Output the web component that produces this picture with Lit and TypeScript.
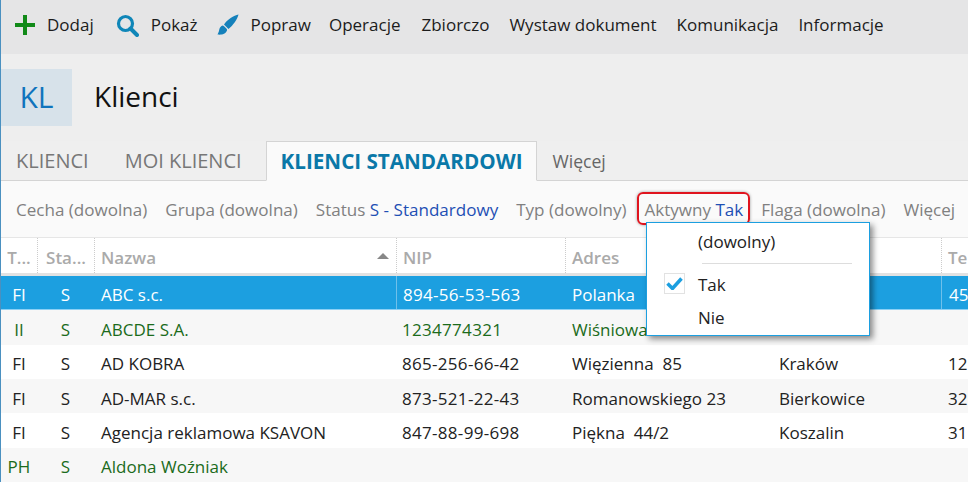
import { LitElement, html, css } from "lit";
import { customElement } from "lit/decorators.js";

const rows = [
  ["FI","S","ABC s.c.","894-56-53-563","Polanka","", "45","sel"],
  ["II","S","ABCDE S.A.","1234774321","Wiśniowa","", "","green"],
  ["FI","S","AD KOBRA","865-256-66-42","Więzienna  85","Kraków","12",""],
  ["FI","S","AD-MAR s.c.","873-521-22-43","Romanowskiego 23","Bierkowice","32",""],
  ["FI","S","Agencja reklamowa KSAVON","847-88-99-698","Piękna  44/2","Koszalin","31",""],
  ["PH","S","Aldona Woźniak","","","","","green"],
];

@customElement("app-root")
export class AppRoot extends LitElement {
  static styles = css`
    :host { display:block; width:968px; height:482px; overflow:hidden; position:relative; font-family:"Open Sans","Noto Sans",sans-serif; font-size:17px; color:#222; background:#fff; box-sizing:border-box; }
    .page { border-left:1px solid #4a90c0; height:482px; box-sizing:border-box; display:flex; flex-direction:column; }
    .toolbar { height:54px; background:#e5e5e6; display:flex; align-items:center; padding:0 0 6px 14px; box-sizing:border-box; font-size:17px; color:#1c1c1c; flex:none; }
    .tool { display:flex; align-items:center; margin-right:20px; white-space:nowrap; }
    .tool svg { margin-right:12px; margin-top:2px; }
    .tool.t1 { margin-right:22px; }
    .tool.t2 { margin-right:19px; }
    .tool.t3 { margin-right:18px; }
    .tool.t4 { margin-right:21px; }
    .title { background:#eeeeee; display:flex; align-items:flex-start; flex:none; padding-top:15px; box-sizing:border-box; height:87px; }
    .kl { width:71px; height:57px; padding-bottom:2px; box-sizing:border-box; background:#d7e2ea; color:#0f74bd; font-size:30px; font-weight:500; display:flex; align-items:center; justify-content:center; }
    .name { font-size:28px; margin-left:22px; color:#111; line-height:54px; }
    .tabs { height:40px; background:#efefef; border-bottom:1px solid #d4d4d4; display:flex; align-items:stretch; flex:none; box-sizing:border-box; padding-left:15px; font-size:20px; color:#777; }
    .tab { display:flex; align-items:center; margin-right:36px; white-space:nowrap; }
    .tab.moi { margin-right:24px; }
    .tab.active { background:#fafafa; border:1px solid #d4d4d4; border-bottom:1px solid #fafafa; margin:0 15px -1px 0; padding:0 14px; color:#0a78a8; font-weight:700; font-size:20.65px; }
    .tab.more { font-size:17.6px; color:#666; }
    .filters { height:57px; background:#fafafa; border-bottom:1px solid #e6e6e6; flex:none; box-sizing:border-box; display:flex; align-items:center; padding:1px 0 0 15px; font-size:17.06px; color:#808080; gap:18px; white-space:nowrap; }
    .filters b { font-weight:400; color:#1e4fb4; }
    .hl { position:relative; }
    .hl::after { content:""; position:absolute; inset:-6px -7px -4px -7px; border:2px solid #e0141e; border-radius:6px; box-shadow:0 0 3px #999; }
    .grid { flex:1; font-size:17px; }
    .row { display:grid; grid-template-columns:36px 57px 302px 169px 207px 169px 1fr; height:34.33px; align-items:center; white-space:nowrap; overflow:hidden; }
    .row > div { padding:4px 0 0 7px; height:100%; display:flex; align-items:center; box-sizing:border-box; overflow:hidden; white-space:pre; }
    .row > div:nth-child(4) { padding-left:6px; letter-spacing:.3px; }
    .row.head { height:38px; color:#aaa; font-weight:600; border-bottom:3px solid #e2e2e2; box-sizing:border-box; }
    .head > div { border-left:1px dotted #ccc; position:relative; }
    .row.head > div { padding-left:6px; letter-spacing:0; }
    .head > div:first-child { border-left:none; }
    .sort { position:absolute; right:7px; top:15px; width:0; height:0; border:6px solid transparent; border-top:none; border-bottom:6px solid #888; }
    .row.alt { background:#f7f7f7; }
    .row.sel { background:#1c9fe0; color:#fff; border-bottom:1px solid #8cd0f5; box-sizing:border-box; }
    .row.sel > div:nth-child(4), .row.sel > div:nth-child(7) { border-left:1px solid #6fc0ea; }
    .row.green { color:#1b6b1b; }
    .row > div.c, .row.head > div.c { justify-content:center; padding-left:0; }
    .menu { position:absolute; left:646px; top:222px; width:224px; height:114px; background:#fff; border:1px solid #1c9fe0; box-sizing:border-box; box-shadow:3px 3px 6px rgba(0,0,0,.45); font-size:17px; color:#222; }
    .mi { position:absolute; left:51px; line-height:24px; }
    .m1 { top:7px; }
    .m2 { top:50px; }
    .m3 { top:83px; }
    .sep { position:absolute; left:55px; right:17px; top:40px; height:1px; background:#ddd; }
    .cb { position:absolute; left:17px; top:50px; width:21px; height:21px; border:1px solid #e2e2e2; box-sizing:border-box; display:flex; align-items:center; justify-content:center; }
    .cb svg { display:block; }
  `;

  render() {
    return html`<div class="page">
      <div class="toolbar">
        <div class="tool t1"><svg width="20" height="20" viewBox="0 0 20 20"><path d="M8 0h4v8h8v4h-8v8H8v-8H0V8h8z" fill="#118a18"/></svg>Dodaj</div>
        <div class="tool t2"><svg width="23" height="23" viewBox="0 0 23 23"><circle cx="9.500" cy="9.500" r="7" fill="none" stroke="#0f86b8" stroke-width="3.200"/><path d="M14.500 14.500l6.500 6.500" stroke="#0f86b8" stroke-width="4" stroke-linecap="round"/></svg>Pokaż</div>
        <div class="tool t3"><svg width="22" height="22" viewBox="0 0 22 22"><path d="M21.500.5C17 1.500 10 5.500 7 10.500l4.500 4.500C16 11.500 20.500 5 21.500.5zM6 11.500c-3 .8-3.500 3-4 5.500-.3 1.300-1 2.500-1.500 3.500 3.500.5 8 0 9.500-4 .3-1 0-2-4-5z" fill="#1581bb"/></svg>Popraw</div>
        <div class="tool t4">Operacje</div>
        <div class="tool">Zbiorczo</div>
        <div class="tool">Wystaw dokument</div>
        <div class="tool">Komunikacja</div>
        <div class="tool">Informacje</div>
      </div>
      <div class="title"><div class="kl">KL</div><div class="name">Klienci</div></div>
      <div class="tabs">
        <div class="tab">KLIENCI</div><div class="tab moi">MOI KLIENCI</div>
        <div class="tab active">KLIENCI STANDARDOWI</div><div class="tab more">Więcej</div>
      </div>
      <div class="filters">
        <span>Cecha (dowolna)</span><span>Grupa (dowolna)</span><span>Status <b>S - Standardowy</b></span><span>Typ (dowolny)</span><span class="hl">Aktywny <b>Tak</b></span><span>Flaga (dowolna)</span><span>Więcej</span>
      </div>
      <div class="grid">
        <div class="row head"><div class="c">T...</div><div class="c">Sta...</div><div>Nazwa<span class="sort"></span></div><div>NIP</div><div>Adres</div><div></div><div>Tel</div></div>
        ${rows.map((r,i)=>html`<div class="row ${r[7]} ${i%2===1?"alt":""}">
          <div class="c">${r[0]}</div><div class="c">${r[1]}</div><div>${r[2]}</div><div>${r[3]}</div><div>${r[4]}</div><div>${r[5]}</div><div>${r[6]}</div></div>`)}
      </div>
      <div class="menu">
        <div class="mi m1">(dowolny)</div>
        <div class="sep"></div>
        <div class="cb"><svg width="17" height="13" viewBox="0 0 17 13"><path d="M1.500 6.500l5 5 9-10" fill="none" stroke="#1c9fe0" stroke-width="3.500"/></svg></div>
        <div class="mi m2">Tak</div>
        <div class="mi m3">Nie</div>
      </div>
    </div>`;
  }
}
